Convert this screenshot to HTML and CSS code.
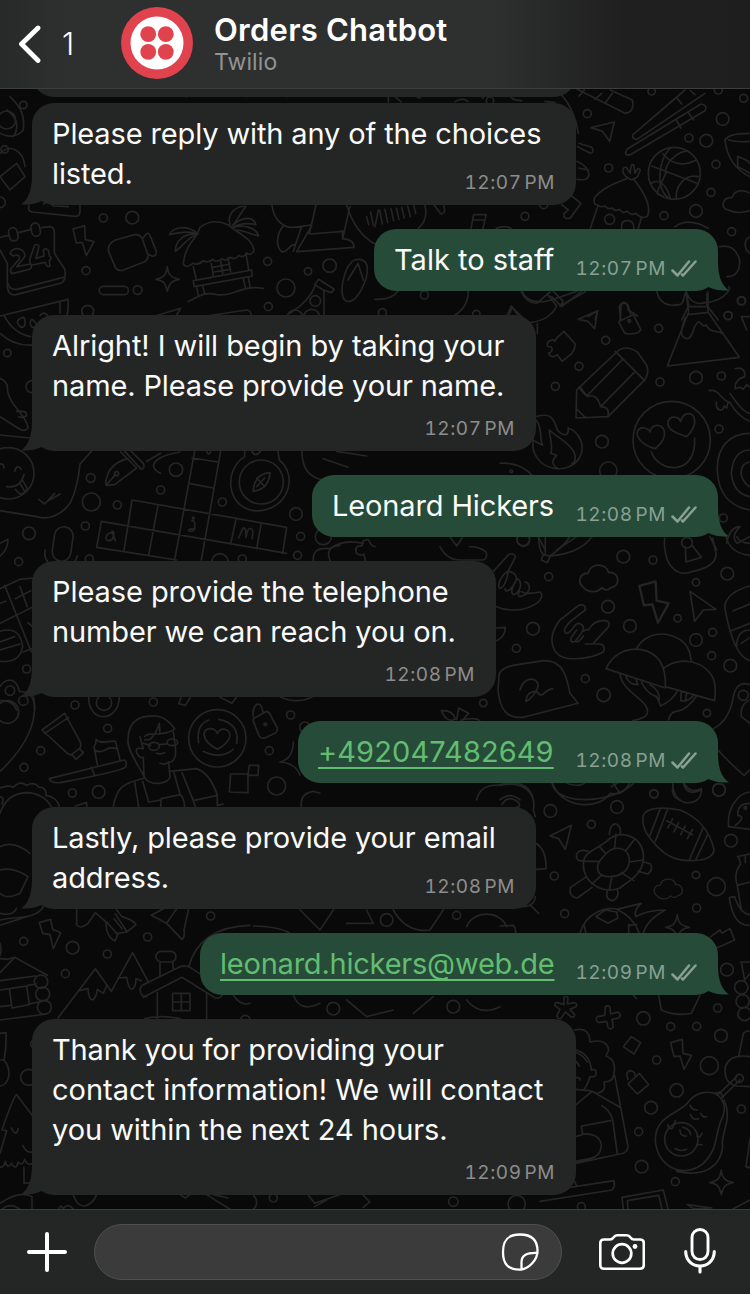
FILE: index.html
```html
<!DOCTYPE html>
<html lang="en">
<head>
<meta charset="utf-8">
<title>Orders Chatbot</title>
<link rel="stylesheet" href="styles.css">
</head>
<body>
<div class="app">
  <svg class="wallpaper" viewBox="0 0 750 1294" width="750" height="1294" aria-hidden="true">
    <defs>
      <path id="bolt" d="M0 10L35 0L37 42L63 48L40 90L28 50L10 52Z"/>
      <path id="cloud" d="M10 62C-8 48-2 22 22 22C28-8 72-8 78 20C108 16 112 60 84 62C76 72 66 68 60 62C48 76 24 78 10 62Z"/>
      <path id="spark" d="M34 0C36 24 44 32 70 38C46 42 40 50 34 74C28 48 22 42 0 38C24 32 30 26 34 0Z"/>
    </defs>
    <g transform="translate(0 90) scale(.3333)">
      <circle cx="20" cy="90" r="27"/><path d="M30 20C60 50 75 70 70 120C45 150 0 140-20 110M20 60C50 80 60 110 40 140M0 190C30 160 70 180 75 230M0 260L50 220L75 260L30 300Z"/><circle cx="70" cy="45" r="11"/><circle cx="14" cy="178" r="11"/>
      <path d="M120 0H240M360 14C420 0 480 0 560 20L610 0M700 0L740 20M860 20C900 0 940 0 990 14M1200 0L1260 24M1420 0L1450 24"/>
    </g>
    <g transform="translate(0 190) scale(.3333)">
      <path d="M88 45Q80 62 96 66L225 79Q240 80 240 65V45M130 42Q145 30 160 48L205 50"/>
      <path d="M0 142L25 136M55 128L94 118M124 113L148 110Q161 110 163 124V190M0 180L22 220V290Q24 318 48 314L184 279Q200 270 194 237L163 190M24 280Q28 300 50 298L190 262"/>
      <rect x="27" y="113" width="26" height="40" rx="13" transform="rotate(-12 40 133)"/><rect x="94" y="99" width="26" height="40" rx="13" transform="rotate(-12 107 119)"/>
      <path d="M30 190C45 165 78 178 74 200L50 230L92 222Q98 234 88 238L36 251Q28 244 34 235L58 207Q60 190 40 198ZM104 165Q118 160 116 173L108 205L132 198L130 180Q142 172 146 184L148 198Q158 204 148 212L150 228Q140 234 136 217L96 225Q86 220 90 206Z"/>
      <use href="#bolt" x="219" y="107"/>
      <path d="M346 150L404 134Q418 132 426 144L444 194Q446 208 432 216L368 241Q352 244 346 232L325 182Q324 160 346 150ZM428 145L440 131Q446 127 450 136L469 184Q470 198 458 199L442 192"/>
      <use href="#spark" x="468" y="230"/><rect x="298" y="289" width="87" height="25" rx="12"/>
      <path d="M600 112Q640 82 686 106C720 135 757 145 762 182Q755 198 740 190Q730 206 716 196Q706 212 690 202Q680 216 666 206Q650 220 638 208Q626 220 610 212Q594 228 578 220Q558 238 550 222C556 160 590 150 600 112Z"/>
      <path d="M592 130C560 104 520 110 508 134C540 126 570 122 590 132C550 130 526 154 526 184C550 168 564 140 594 132M690 104C680 70 710 46 738 50C720 70 710 96 696 108C730 76 760 80 768 104C740 98 720 100 700 112C730 104 770 112 776 138C750 132 730 120 706 120M580 230L588 265M738 190L746 240M634 220L640 256M684 204L692 246M580 272L755 240L757 258L582 290ZM590 292L596 320M608 288L614 310M730 264L736 292M745 262L750 290M638 232L690 222M640 246L692 238M662 212L668 250M564 335C600 318 610 305 650 314C700 322 720 284 790 295"/>
      <path d="M816 45C820 90 852 114 880 112C910 112 930 100 935 108L890 185L1062 172Q1064 150 1028 146L1050 50M948 45L928 132L1030 124M1028 126V146M904 112L880 184M850 108C834 126 826 160 840 180C856 200 870 160 884 164M1040 45Q1066 130 1125 162M1100 80L1106 104M1112 66L1120 106"/>
      <path d="M1052 220C1060 204 1100 200 1102 234C1104 270 1074 330 1050 334C1020 340 1024 290 1032 262C1038 240 1044 226 1052 220ZM1044 270L1074 220L1090 270M944 284L956 268L1003 298L994 308L970 300ZM944 290Q930 330 870 370M972 304V380"/>
      <circle cx="310" cy="84" r="12"/><circle cx="397" cy="83" r="19"/><circle cx="258" cy="242" r="12"/><circle cx="413" cy="300" r="13"/><circle cx="263" cy="364" r="18"/><circle cx="803" cy="214" r="12"/><circle cx="858" cy="294" r="27"/><circle cx="924" cy="244" r="11"/><circle cx="989" cy="227" r="20"/><circle cx="946" cy="333" r="16"/><circle cx="805" cy="350" r="12"/><circle cx="0" cy="37" r="16"/><circle cx="22" cy="489" r="11"/><circle cx="96" cy="590" r="18"/><circle cx="885" cy="384" r="24"/><circle cx="935" cy="382" r="24"/>
      <path d="M0 378L204 328Q212 430 120 462Q50 476 0 430M12 376Q40 430 92 440M180 336V370M466 378L542 355L528 378M620 378L740 360Q752 360 754 376M54 402C48 390 60 384 72 382C76 396 80 412 62 412ZM96 412C86 400 92 390 96 388C110 398 118 412 96 412ZM120 376Q134 362 144 378"/>
      <path d="M0 565Q26 576 22 600C30 650 76 670 84 712Q76 730 50 712L0 680M50 664Q80 660 80 676Q70 686 56 680M0 735L90 744"/>
    </g>
    <g transform="translate(375 60) scale(.3333)">
      <path d="M604 86L750 160Q780 156 772 120L706 90M628 90L612 108M660 118L680 100M690 130L712 100M648 203L718 186L704 244L682 214Z"/>
      <path d="M930 90L774 224Q770 238 786 238L990 100M908 116L920 132M946 92L960 104M978 132Q1000 136 990 152L766 284Q744 288 756 268ZM904 180L918 204M940 158L956 180"/>
      <circle cx="898" cy="340" r="78"/><path d="M830 318L966 370M886 264C850 300 840 390 884 416M936 272C900 280 870 310 872 340C860 370 840 400 850 404M864 282C900 324 940 312 964 300M828 370C860 350 880 390 886 416M970 350C930 340 900 380 904 416"/>
      <path d="M756 352C740 340 740 320 754 322L766 340Q766 310 776 314L780 340Q790 318 796 330L788 350L770 360ZM756 356C720 370 680 384 658 414Q654 436 668 434Q676 444 690 438Q700 450 712 444Q720 456 734 448Q742 462 756 454Q768 468 782 460Q804 480 818 468C828 440 810 400 778 360M668 440L646 505M800 470L790 505"/>
      <path d="M740 505V496Q742 480 760 482Q778 484 776 505M1125 220Q1060 220 1050 240Q1060 320 1125 350M1060 240Q1090 248 1125 244M1088 290V320Q1110 330 1125 340M1088 290Q1120 300 1125 310M1125 400C1108 390 1080 386 1072 412C1040 412 1036 446 1060 450C1080 460 1100 460 1125 452"/>
      <path d="M560 105Q600 150 610 220M612 250L650 262Q660 276 646 280L608 260M606 304Q640 320 642 344Q640 364 606 358M610 324L640 330M590 408L618 430L586 474Q566 480 566 462L580 450L560 434M40 110V126M78 126L60 110M240 125Q264 110 278 124M404 105Q410 122 440 122M510 124L540 128"/>
      <path d="M0 500L10 450M14 450L22 492M30 448L38 488M48 446L56 482M64 444L72 478M80 442L88 474M98 438L106 470M116 436L122 460M150 436Q160 480 130 505M178 436L198 462Q212 460 208 446L206 436M296 464H334L324 505M296 464L288 505M294 480H330M364 505Q390 495 408 505M900 500Q940 470 1000 505M1034 560Q1080 550 1094 600Q1096 650 1056 650M845 690C850 730 880 740 906 734C930 740 926 700 934 696C946 730 970 734 990 728C1040 726 1070 690 1062 680M934 700L942 740L996 740V700M940 740L920 780M998 740L1030 780M1125 530Q1104 540 1114 570L1125 580"/>
      <path d="M0 718Q50 720 70 692M280 692Q280 740 240 765M440 692Q460 740 530 720L610 692M530 710L560 740L620 694M400 770L412 742L440 770M640 770L668 752L660 780M738 740Q740 722 756 734L760 750L788 768M738 742L736 780"/>
      <circle cx="830" cy="94" r="11"/><circle cx="1030" cy="90" r="12"/><circle cx="1106" cy="115" r="12"/><circle cx="1043" cy="177" r="19"/><circle cx="637" cy="161" r="12"/><circle cx="942" cy="234" r="12"/><circle cx="994" cy="242" r="19"/><circle cx="1023" cy="313" r="12"/><circle cx="701" cy="324" r="12"/><circle cx="1008" cy="397" r="12"/><circle cx="963" cy="453" r="19"/><circle cx="867" cy="467" r="12"/><circle cx="704" cy="478" r="15"/><circle cx="1070" cy="515" r="12"/><circle cx="450" cy="469" r="12"/><circle cx="506" cy="434" r="12"/><circle cx="345" cy="122" r="11"/><circle cx="148" cy="705" r="12"/><circle cx="22" cy="758" r="12"/><circle cx="304" cy="762" r="11"/><circle cx="1100" cy="722" r="12"/><circle cx="1060" cy="767" r="12"/>
    </g>
    <g transform="translate(500 290) scale(.3333)">
      <path d="M20 78L34 48L56 78M112 100V130M64 6Q80 40 110 40L150 6M90 98Q150 90 170 48L144 14M160 4L190 34L180 48M180 48L256 5M235 88L293 62L284 116L264 94ZM360 92L400 74L422 118Q420 126 408 130L386 132Q374 132 370 122L356 96ZM362 90L358 50Q370 26 384 46L392 72"/>
      <circle cx="388" cy="93" r="4"/>
      <path d="M192 124L226 162Q226 176 216 190L186 214L172 194Q154 208 146 190Q164 180 152 170Q136 172 144 156Q160 144 164 154L172 142ZM348 188Q376 160 414 188L440 226Q450 250 432 272L324 380L228 384L230 300ZM346 184L434 272M366 210L262 316M402 248L302 350M240 290L262 320Q290 308 302 350Q330 350 324 378M228 356L258 384M236 292Q250 310 262 320"/>
      <path d="M558 4L566 66L502 228L718 202L624 66V6M562 74L620 68M556 82C540 128 540 140 560 146C580 146 580 106 590 102C600 80 606 120 618 104C630 130 650 120 666 130"/>
      <circle cx="515" cy="450" r="116"/><path d="M466 476C440 470 408 450 412 426C420 404 446 416 450 426C456 400 480 402 490 416C502 440 480 464 466 476ZM560 440C530 430 500 420 504 396C510 374 536 380 542 394C548 368 574 364 582 382C590 406 572 430 560 440ZM454 486C476 550 590 560 584 444"/>
      <path d="M100 382C150 366 160 380 172 420C190 440 208 440 204 414C240 426 258 470 238 504C210 550 130 548 104 490Q96 476 100 440M148 420C150 450 160 470 152 490L170 496Q146 520 172 534M148 420C180 450 200 450 222 486Q232 510 216 522M108 390C130 416 116 440 128 466L102 452M0 520Q60 516 96 556M628 302C660 296 660 330 690 338Q714 380 750 394M650 336C644 360 670 370 672 348L680 354L684 338M706 236C730 230 736 244 734 260Q702 270 706 296L720 292L730 298L740 284L750 292M690 310Q730 370 750 370M750 430C690 430 650 470 652 540C654 610 690 650 750 660M750 480Q700 480 694 550Q700 610 750 620M750 516Q720 520 724 556Q730 580 750 590M724 80H750M724 80L740 120"/>
      <circle cx="476" cy="115" r="12"/><circle cx="684" cy="77" r="12"/><circle cx="724" cy="33" r="12"/><circle cx="317" cy="151" r="12"/><circle cx="237" cy="229" r="12"/><circle cx="166" cy="289" r="12"/><circle cx="480" cy="276" r="12"/><circle cx="588" cy="263" r="19"/><circle cx="664" cy="258" r="12"/><circle cx="657" cy="417" r="12"/><circle cx="306" cy="455" r="19"/><circle cx="325" cy="542" r="26"/><circle cx="670" cy="684" r="12"/><circle cx="34" cy="544" r="4"/><circle cx="70" cy="750" r="19"/>
      <path d="M114 740L136 780M230 740L170 780M630 740L650 780M680 760Q690 710 720 710Q690 740 712 760L750 740"/>
    </g>
    <g transform="translate(0 440) scale(.3333)">
      <circle cx="25" cy="100" r="77"/><path d="M0 72Q12 70 12 84M44 94Q50 70 64 88M20 140Q60 146 72 104M46 148L60 162Q74 162 82 146L68 122M60 130L74 154M274 34L240 72Q232 150 210 190C180 230 140 240 110 230L0 212M116 178L134 192L164 160M142 184L180 162"/>
      <path d="M362 36L410 84L344 134L320 136Q314 130 320 114Q330 70 384 56M346 104L322 132M374 34L424 88Q436 84 430 70L394 34M440 64L482 40M540 36C460 50 440 80 482 100"/><circle cx="350" cy="101" r="6"/>
      <path d="M304 244L860 340M290 322L530 360M304 244L290 322M396 180L372 332M396 180L860 262L848 340M474 196L446 346M584 34L524 360M662 34L604 360M576 54L654 66M566 130L640 144M708 238L692 312M784 250L770 326M384 262L396 180"/>
      <path d="M342 278C316 276 312 302 326 302C344 302 344 270 336 274L346 302M566 270Q574 264 584 268V262Q586 240 576 242M584 264Q582 278 566 272M716 294L728 266Q738 256 738 292Q742 262 754 266Q762 270 756 296M620 34Q624 48 632 36"/><circle cx="580" cy="234" r="3"/>
      <circle cx="784" cy="126" r="66"/><path d="M734 34V50C670 90 680 200 760 212C860 220 900 110 838 60L834 34M756 34Q766 54 782 34M810 98C776 100 762 120 760 154C790 150 808 130 810 98ZM770 114L794 140M794 114L770 140M906 34Q906 110 970 120M970 56L1044 82M1010 34L1100 48"/>
      <rect x="160" y="260" width="56" height="104" rx="28" transform="rotate(8 188 312)"/><path d="M136 330Q130 350 144 366M232 348L226 362M0 310L24 298Q24 330 0 348"/>
      <circle cx="528" cy="89" r="20"/><circle cx="272" cy="114" r="13"/><circle cx="274" cy="186" r="27"/><circle cx="352" cy="195" r="12"/><circle cx="482" cy="150" r="12"/><circle cx="667" cy="186" r="12"/><circle cx="888" cy="222" r="19"/><circle cx="902" cy="289" r="12"/><circle cx="893" cy="346" r="12"/><circle cx="256" cy="258" r="12"/><circle cx="87" cy="280" r="19"/><circle cx="56" cy="365" r="12"/><circle cx="268" cy="357" r="12"/><circle cx="660" cy="366" r="25"/><circle cx="727" cy="357" r="12"/><circle cx="970" cy="290" r="24"/><circle cx="80" cy="687" r="12"/><circle cx="30" cy="752" r="14"/><circle cx="70" cy="782" r="14"/>
      <path d="M940 362Q936 320 990 326Q1030 296 1090 310M990 362Q974 320 1020 316M1070 340Q1060 316 1086 318Q1086 296 1106 300Q1114 320 1125 320M1070 340Q1084 350 1092 342L1096 362"/>
      <path d="M0 446L60 418L100 414M14 436L94 636M0 550L100 500M70 636L100 624M0 490L18 484M46 476L92 452M60 440L82 500M84 548L100 562M0 574Q60 556 68 620Q60 670 0 664M0 606L44 590M0 630L60 612M0 740Q14 716 38 722Q54 730 58 754L74 756Q104 764 104 810M0 782Q40 780 50 810"/>
    </g>
    <g transform="translate(440 530) scale(.3333)">
      <path d="M0 50Q20 90 60 90H130Q144 84 138 66Q120 50 88 50M30 20L50 48L66 24M296 20Q296 60 310 74L330 78Q420 70 456 20M316 20V70M390 20Q370 50 330 78M310 74L304 90L322 98L330 80"/>
      <path d="M160 124L206 74Q224 66 226 82L204 124M204 124C190 130 170 160 178 174C190 178 204 146 204 124C224 126 240 140 220 166C208 186 192 186 196 176M232 146C250 156 240 190 220 194Q210 186 220 170M256 156C276 164 270 194 240 200Q230 196 240 184M246 186Q260 194 300 186Q314 200 290 220C250 246 200 244 170 230"/>
      <path d="M378 310Q364 300 394 272L436 240Q438 220 416 226L360 270C320 320 330 380 390 386C430 388 460 382 490 366Q500 340 470 342L436 342M378 310Q386 312 402 290Q416 270 430 290Q434 300 406 334Q388 340 394 322L410 300M406 334Q416 340 430 318M430 304Q440 296 446 300Q460 270 496 272Q514 276 504 292L462 338M170 294L196 292Q196 320 170 332"/>
      <use href="#cloud" transform="translate(420 106) scale(1.1 1.08)"/><use href="#bolt" transform="translate(598 154) scale(1.4 1.38)"/><path d="M750 184L828 238L790 240L764 274ZM674 24Q670 50 682 90C700 130 730 136 760 124Q830 110 828 70L818 24M736 52L738 96L784 82L756 46"/><circle cx="741" cy="38" r="16"/>
      <path d="M178 430Q190 412 220 406L310 392C370 390 380 440 390 490L414 520L250 562C200 566 180 540 174 480ZM240 480C250 440 290 440 294 464C296 480 270 510 258 514C260 480 290 480 300 494C314 500 310 480 338 476"/>
      <path d="M498 416C520 370 560 354 600 358C650 366 680 400 676 474ZM588 358C610 320 650 304 690 316C740 330 750 360 754 394M670 416C700 392 740 386 780 404C824 430 830 460 824 512L676 470M540 434C550 490 630 510 622 550Q618 566 578 572M558 438Q564 464 594 464L588 448M604 456Q620 490 650 500L662 528Q700 510 714 480M630 464Q660 480 658 510M724 484L722 512Q746 516 762 494M740 490L736 514M768 500Q740 540 710 544Q690 546 686 570"/>
      <path d="M930 168Q860 186 854 230Q880 380 930 392M880 242L930 222M870 304L930 280M904 340L930 322M930 300Q890 300 890 350M820 596Q870 570 880 500Q890 450 930 464M930 510Q900 520 904 560L930 580M834 660Q870 700 912 736L930 720M858 20Q870 70 930 76M890 20Q900 40 930 40"/>
      <path d="M4 542Q40 540 46 568Q20 580 4 542ZM50 568L56 534L86 550L66 572M64 570Q110 560 120 574M110 810Q120 764 170 766C230 750 270 760 280 810M180 810Q210 784 240 810M336 760C350 830 520 820 580 760M520 760L540 790M700 765Q690 800 720 810M730 760Q740 800 784 780"/>
      <circle cx="326" cy="140" r="12"/><circle cx="550" cy="80" r="19"/><circle cx="639" cy="90" r="12"/><circle cx="504" cy="230" r="19"/><circle cx="570" cy="288" r="19"/><circle cx="279" cy="296" r="19"/><circle cx="229" cy="355" r="12"/><circle cx="436" cy="446" r="12"/><circle cx="491" cy="495" r="20"/><circle cx="130" cy="519" r="11"/><circle cx="768" cy="157" r="11"/><circle cx="862" cy="131" r="19"/><circle cx="713" cy="265" r="11"/><circle cx="768" cy="330" r="19"/><circle cx="818" cy="307" r="12"/><circle cx="815" cy="377" r="12"/><circle cx="871" cy="407" r="19"/><circle cx="801" cy="549" r="11"/><circle cx="250" cy="28" r="19"/><circle cx="910" cy="496" r="15"/><circle cx="642" cy="792" r="12"/><circle cx="837" cy="779" r="19"/>
    </g>
    <g transform="translate(0 680) scale(.3333)">
      <path d="M100 50C116 120 80 200 0 274M126 150L194 100L240 184Q246 200 238 206L214 224Q208 226 200 218ZM134 160L206 112M238 206L250 218L228 238L216 224M148 296L372 240Q384 246 376 262Q360 274 180 308Q150 310 148 296ZM274 262L284 286M292 254L282 200Q290 190 288 178C304 196 330 180 346 184Q356 220 360 240M284 210Q296 220 316 210Q330 200 350 206"/>
      <path d="M436 296C424 270 380 210 384 180C384 120 420 106 470 108Q500 112 524 146Q520 156 478 162Q440 160 434 170M434 180L450 178Q470 160 478 130L480 160M420 170L430 206Q400 200 412 222Q420 236 430 232L432 290Q444 312 476 310Q508 306 510 290L506 248Q532 244 526 200L520 156M430 190L452 196M478 194L500 192"/>
      <ellipse cx="462" cy="199" rx="16" ry="12"/><ellipse cx="517" cy="187" rx="16" ry="10"/><path d="M470 220Q482 224 494 218M480 250Q496 256 506 246M340 380C350 320 370 310 434 294M508 274L590 266Q630 280 652 346L580 362L546 278M404 306L416 380M428 304L446 366L482 360M482 380L484 356L540 344Q552 350 554 380M522 278L540 342M580 362L586 380M652 346V376M652 376L670 372M226 378L260 368V380"/>
      <circle cx="652" cy="175" r="86"/><path d="M652 208C600 180 606 146 630 146Q646 146 652 160Q660 144 676 148C704 160 686 190 652 208ZM596 188C590 150 600 130 626 120M656 118Q720 130 710 190M700 208Q660 240 610 214"/>
      <path d="M760 110Q756 82 772 72Q784 72 786 86L790 98M764 114L800 94Q808 96 812 106L832 144Q834 156 820 162L794 174Q780 176 776 164L760 124Q758 116 764 114Z"/><circle cx="796" cy="133" r="4"/>
      <path d="M692 282H744V338L688 336ZM748 256H776L774 286H744ZM880 186Q880 236 840 246Q888 250 900 286M904 380Q900 340 940 334L960 340M536 72L544 50M540 72L556 76L570 54M660 52L696 70L710 50M840 50Q890 74 938 50M266 50C264 130 356 130 358 50"/>
      <circle cx="312" cy="68" r="23"/><circle cx="225" cy="75" r="12"/><circle cx="323" cy="145" r="12"/><circle cx="460" cy="66" r="12"/><circle cx="122" cy="212" r="12"/><circle cx="72" cy="262" r="12"/><circle cx="217" cy="339" r="12"/><circle cx="296" cy="336" r="19"/><circle cx="872" cy="105" r="12"/><circle cx="808" cy="212" r="12"/><circle cx="830" cy="318" r="27"/><circle cx="915" cy="142" r="16"/><circle cx="22" cy="96" r="34"/>
      <path d="M0 400Q20 340 80 338Q130 340 154 380M0 324Q26 314 40 322Q60 300 80 316Q104 304 116 322Q140 320 138 348M138 346Q170 350 178 380M0 350Q14 352 6 372"/>
      <path d="M0 500Q40 480 90 520M0 570Q40 560 84 590L60 640Q20 660 0 640"/>
    </g>
    <g transform="translate(500 780) scale(.3333)">
      <path d="M0 16C70 0 110 40 100 90L106 110M6 74Q26 40 58 70L58 80L44 84M156 4C180 90 300 90 330 40Q370 50 392 4M200 10Q240 24 260 4M334 20L360 4M518 10C520 90 610 80 604 26Q570 44 550 6"/>
      <path d="M430 106C440 82 490 80 540 90C590 110 630 150 642 210Q640 234 600 240C520 250 480 220 440 160Q424 130 430 106ZM480 88L450 166M502 90L466 184M610 142L568 240M624 162L588 238M500 122L578 164M518 116L504 144M536 128L522 156M556 138L542 164M578 148L562 176M150 168L214 136L196 208L176 176Z"/>
      <path d="M322 182C350 150 420 160 430 220C436 280 390 300 360 324C310 344 250 310 250 252C250 214 290 210 322 182Z"/><path d="M310 230C340 190 390 200 388 244C386 280 350 290 330 290C290 290 280 260 310 230ZM348 162L344 202M298 200L318 222M404 178L376 214M430 240L388 246M402 302L364 278M328 330L336 290M276 312L306 284M250 244H296M328 164Q330 130 348 132Q366 140 360 164M250 242Q226 246 230 222Q240 206 264 214M276 322L232 354Q204 350 212 322L256 292M322 334Q314 360 340 362Q360 350 352 328M432 246L452 252Q460 270 444 282L414 274"/>
      <use href="#cloud" transform="translate(463 298) scale(.82 .8)"/><use href="#spark" x="498" y="404"/>
      <path d="M240 460C260 390 330 380 350 388L424 370Q400 390 408 410Q440 390 496 390Q440 420 430 460M350 388Q400 410 418 460M288 410L316 390L350 396L354 414L324 430ZM386 434V460M252 436L258 460M386 436L410 434M108 190Q140 210 138 266L108 268M66 380Q104 380 106 350M90 374L116 400M0 438L40 436Q50 450 46 460"/>
      <path d="M750 36C710 40 680 90 686 140L750 148M750 70Q710 70 714 106Q740 110 706 136M712 230L750 222M716 232L722 252M736 226V248M722 252Q700 280 712 316L724 390M712 316L750 306M688 354Q700 440 750 436M690 352L704 350Q720 400 750 404M632 470L660 450L666 460L690 446L704 480L650 504M722 546H750M724 546L734 600L750 580"/>
      <path d="M400 646L410 656M476 646L484 690Q530 710 574 700L600 646"/>
      <circle cx="151" cy="93" r="19"/><circle cx="351" cy="81" r="19"/><circle cx="274" cy="133" r="12"/><circle cx="462" cy="41" r="12"/><circle cx="657" cy="30" r="19"/><circle cx="693" cy="182" r="19"/><circle cx="163" cy="288" r="12"/><circle cx="194" cy="401" r="12"/><circle cx="588" cy="285" r="11"/><circle cx="649" cy="320" r="27"/><circle cx="590" cy="384" r="12"/><circle cx="681" cy="569" r="19"/><circle cx="724" cy="622" r="20"/><circle cx="728" cy="664" r="20"/><circle cx="736" cy="84" r="4"/>
    </g>
    <g transform="translate(0 890) scale(.3333)">
      <path d="M0 70Q40 80 50 54M0 90Q20 86 40 84Q120 80 130 48M0 106L80 80M118 98L152 88L158 118L182 128L160 176L150 134L128 130ZM230 56V104Q240 120 264 100L286 68L318 96L320 120Q330 150 346 152L354 130L380 126L408 104Q400 90 366 80L350 60M320 96L350 130M346 72L380 124M342 86L366 116M454 76L500 100L546 148Q556 140 552 120L566 56M454 76L490 56M500 100L530 56"/>
      <path d="M0 206L24 208L44 202L142 256M0 248L44 202M0 272L106 258M0 300L28 296M82 286L110 282M0 350L32 346M86 342L116 336M0 390L140 372M28 296L80 288L88 344L36 354Z"/>
      <circle cx="123" cy="275" r="20"/><circle cx="128" cy="312" r="21"/><circle cx="133" cy="352" r="21"/>
      <path d="M174 384L286 236L334 304L398 188L446 278M236 302L264 296Q266 330 278 330Q290 320 292 298L310 310L320 288M354 264L380 262Q386 298 396 298Q408 290 408 266L424 272"/>
      <rect x="468" y="184" width="60" height="32" rx="16"/><path d="M480 220V258M518 216L520 236M420 300Q420 290 430 284L540 230Q556 224 570 232L660 290M430 322L546 262L646 324Q660 326 666 316M420 300Q422 320 440 320M472 308V386M620 310V386M434 386Q480 374 540 386M518 310H570V362H518ZM544 310V362M518 336H570M566 230Q600 110 750 106M700 316Q724 350 750 340"/>
      <circle cx="71" cy="154" r="12"/><circle cx="218" cy="173" r="19"/><circle cx="196" cy="251" r="12"/><circle cx="322" cy="192" r="12"/><circle cx="443" cy="141" r="12"/><circle cx="632" cy="78" r="12"/><circle cx="736" cy="390" r="14"/><circle cx="86" cy="562" r="24"/><circle cx="104" cy="462" r="12"/>
      <path d="M0 430L18 428Q20 470 12 510Q30 530 26 560Q20 586 0 588M0 510H12M50 614Q40 620 6 720L20 722L0 790M50 614L100 680M34 714Q50 744 54 716M68 766Q80 790 96 786M0 830Q10 836 16 814Q22 840 34 820Q48 844 54 816Q68 830 74 808Q82 830 98 820M72 832V880L90 878M0 160Q6 180 0 196"/>
      <path d="M0 940Q60 900 96 920V958M6 958Q30 936 60 958M176 958Q182 940 190 956Q204 936 220 958M220 914Q230 950 256 948Q280 940 290 914M620 914L690 958M640 914L684 924"/>
      <path d="M760 108Q840 110 870 130M900 60L960 120L1000 60M1040 100H1120L1100 60M1180 60Q1220 130 1290 120L1330 60M1400 110C1420 60 1500 60 1520 110M880 314Q900 370 960 340M1040 330L1100 380L1180 360M1240 370L1300 320M1400 330Q1440 380 1500 350"/><circle cx="1160" cy="90" r="19"/><circle cx="1370" cy="76" r="12"/><circle cx="1000" cy="356" r="19"/><circle cx="1360" cy="350" r="19"/><circle cx="820" cy="924" r="12"/>
      <path d="M540 914L556 924L570 914M760 914Q780 940 760 958M924 914L944 940L1020 914M944 950L980 930M1088 914L1110 936L1090 952"/>
    </g>
    <g transform="translate(540 990) scale(.3333)">
      <path d="M72 22Q82 16 84 24L82 42L102 38Q114 40 108 50L90 58L104 74Q104 84 92 80L76 66L62 86Q50 88 52 74L60 58L44 46Q44 36 54 38L72 44ZM196 50Q206 44 210 52L212 72L234 66Q246 74 236 84L216 88L220 110Q212 122 204 112L200 94L176 98Q164 90 172 80L194 76ZM274 140L302 158L282 192L250 170ZM264 268Q254 244 272 242Q288 246 284 256M298 250L326 284L292 312L264 282Z"/>
      <use href="#bolt" x="392" y="148"/><use href="#spark" x="510" y="540"/>
      <path d="M104 120Q150 110 150 156Q200 144 206 180L198 198Q230 210 222 250Q220 276 192 276Q200 306 170 310L150 302Q130 300 104 298M106 180Q150 190 154 240Q170 236 168 250Q170 262 150 260Q140 290 132 298M106 186Q130 196 142 216M224 256L264 470Q262 490 240 492L106 520M108 344L156 304L240 352M186 348Q210 360 218 390L232 492M126 408L212 392M124 410L128 434L106 440M128 432Q184 430 184 470Q180 500 150 506L106 514M110 216L118 228M106 262Q122 262 120 270M0 634L216 600Q226 590 222 572L90 592M104 574L110 588"/>
      <path d="M490 308C540 300 564 340 548 380C520 440 540 470 490 520C430 570 350 530 346 450C346 370 430 370 450 330Q466 312 490 308ZM552 330C580 390 540 430 548 470C540 540 480 560 410 544"/><circle cx="424" cy="448" r="50"/><path d="M450 346Q456 360 472 360M482 370Q488 384 500 380M452 374Q458 392 476 386M420 420Q420 440 440 438M428 412Q450 416 452 434M406 476Q424 486 440 478M384 404Q384 418 396 416Q402 406 406 392M470 438Q480 446 486 430M470 464L486 464M532 316L590 260M546 322L600 270M524 310L540 306L550 322M630 200Q570 190 556 230Q550 280 590 288L630 290M596 200L610 130Q620 120 630 124"/><circle cx="598" cy="265" r="12"/><circle cx="614" cy="72" r="20"/>
      <path d="M250 656L246 622L370 600L384 656M264 656L262 632L356 616L366 656M442 644L516 654L460 656ZM580 656L630 630M630 446L618 530L630 534"/>
      <circle cx="310" cy="85" r="20"/><circle cx="392" cy="110" r="12"/><circle cx="470" cy="109" r="12"/><circle cx="533" cy="54" r="12"/><circle cx="543" cy="137" r="19"/><circle cx="350" cy="210" r="12"/><circle cx="508" cy="227" r="27"/><circle cx="410" cy="301" r="20"/><circle cx="333" cy="353" r="19"/><circle cx="296" cy="425" r="12"/><circle cx="305" cy="530" r="19"/><circle cx="406" cy="575" r="12"/><circle cx="604" cy="357" r="12"/><circle cx="124" cy="650" r="12"/><circle cx="-70" cy="642" r="26"/><circle cx="-260" cy="635" r="14"/>
    </g>
  </svg>

  <header class="header">
    <svg class="back" viewBox="0 0 24 40" width="24" height="40"><path d="M21 4L4.500 20L21 36.500"/></svg>
    <span class="count">1</span>
    <svg class="avatar" viewBox="0 0 72 72" width="72" height="72">
      <circle cx="36" cy="36" r="36" fill="#e0434d"/><circle cx="36" cy="36" r="26.500" fill="#fff"/>
      <g fill="#e0434d"><circle cx="27.200" cy="27.200" r="7.900"/><circle cx="44.800" cy="27.200" r="7.900"/><circle cx="27.200" cy="44.800" r="7.900"/><circle cx="44.800" cy="44.800" r="7.900"/></g>
    </svg>
    <div class="titles"><div class="title">Orders Chatbot</div><div class="subtitle">Twilio</div></div>
  </header>

  <main class="chat">
    <div class="bubble stub"></div>
    <div class="bubble in w544"><svg class="tail" viewBox="0 0 40 30"><path d="M12 0C12 14 9 24 1 29.500C10 30 18 28 23 25.500L40 10L30 0Z"/></svg><p>Please reply with any of the choices<br>listed.</p><span class="meta tuck">12:07<i></i>PM</span></div>
    <div class="bubble out w344"><svg class="tail" viewBox="0 0 40 30"><path d="M12 0C12 14 9 24 1 29.500C10 30 18 28 23 25.500L40 10L30 0Z"/></svg><p class="even">Talk to staff</p><span class="meta">12:07<i></i>PM<svg class="ticks" viewBox="0 0 27 20"><path d="M2.500 11.500L7.500 16.500L19 2.500M12 15.500L13 16.500L25.500 2.500"/></svg></span></div>
    <div class="bubble in w504"><svg class="tail" viewBox="0 0 40 30"><path d="M12 0C12 14 9 24 1 29.500C10 30 18 28 23 25.500L40 10L30 0Z"/></svg><p><span class="snug">Alright! I will begin by taking your</span><br>name. Please provide your name.</p><span class="meta">12:07<i></i>PM</span></div>
    <div class="bubble out w406"><svg class="tail" viewBox="0 0 40 30"><path d="M12 0C12 14 9 24 1 29.500C10 30 18 28 23 25.500L40 10L30 0Z"/></svg><p>Leonard Hickers</p><span class="meta">12:08<i></i>PM<svg class="ticks" viewBox="0 0 27 20"><path d="M2.500 11.500L7.500 16.500L19 2.500M12 15.500L13 16.500L25.500 2.500"/></svg></span></div>
    <div class="bubble in w464"><svg class="tail" viewBox="0 0 40 30"><path d="M12 0C12 14 9 24 1 29.500C10 30 18 28 23 25.500L40 10L30 0Z"/></svg><p><span class="snug">Please provide the telephone</span><br>number we can reach you on.</p><span class="meta">12:08<i></i>PM</span></div>
    <div class="bubble out w420"><svg class="tail" viewBox="0 0 40 30"><path d="M12 0C12 14 9 24 1 29.500C10 30 18 28 23 25.500L40 10L30 0Z"/></svg><p><a class="link phone">+492047482649</a></p><span class="meta">12:08<i></i>PM<svg class="ticks" viewBox="0 0 27 20"><path d="M2.500 11.500L7.500 16.500L19 2.500M12 15.500L13 16.500L25.500 2.500"/></svg></span></div>
    <div class="bubble in w504"><svg class="tail" viewBox="0 0 40 30"><path d="M12 0C12 14 9 24 1 29.500C10 30 18 28 23 25.500L40 10L30 0Z"/></svg><p>Lastly, please provide your email<br>address.</p><span class="meta tuck">12:08<i></i>PM</span></div>
    <div class="bubble out w518"><svg class="tail" viewBox="0 0 40 30"><path d="M12 0C12 14 9 24 1 29.500C10 30 18 28 23 25.500L40 10L30 0Z"/></svg><p><a class="link email">leonard.hickers@web.de</a></p><span class="meta">12:09<i></i>PM<svg class="ticks" viewBox="0 0 27 20"><path d="M2.500 11.500L7.500 16.500L19 2.500M12 15.500L13 16.500L25.500 2.500"/></svg></span></div>
    <div class="bubble in w544"><svg class="tail" viewBox="0 0 40 30"><path d="M12 0C12 14 9 24 1 29.500C10 30 18 28 23 25.500L40 10L30 0Z"/></svg><p>Thank you for providing your<br><span class="even">contact information! We will contact</span><br><span class="snug">you within the next 24 hours.</span></p><span class="meta">12:09<i></i>PM</span></div>
  </main>

  <footer class="composer">
    <svg class="icon plus" viewBox="0 0 40 40" width="40" height="40"><path d="M20 2V38M2 20H38" stroke-width="4"/></svg>
    <div class="field">
      <svg class="icon" viewBox="0 0 38 38" width="38" height="38"><path d="M20 36.500C7 37 2 31 2 19C2 7 7 1.500 19 1.500C31 1.500 36.500 7 36.500 18C36.500 27 28 35.500 20 36.500ZM36.500 20C25 19.500 20.500 23 20.500 29V36.500" stroke-width="2.300"/></svg>
    </div>
    <svg class="icon camera" viewBox="0 0 46 36" width="46" height="36"><path d="M5 5.500H11Q13 5.500 14.500 3.500Q16 1.300 18 1.300H28Q30 1.300 31.500 3.500Q33 5.500 35 5.500H41Q44.800 5.500 44.800 9V31Q44.800 34.700 41 34.700H5Q1.300 34.700 1.300 31V9Q1.300 5.500 5 5.500Z" stroke-width="2.600"/><circle cx="23" cy="19.500" r="9.300" stroke-width="2.700"/><circle cx="36" cy="12.500" r="2.400" fill="#fff" stroke="none"/></svg>
    <svg class="icon mic" viewBox="0 0 32 46" width="32" height="46"><rect x="8" y="1.500" width="16" height="30" rx="8" stroke-width="2.900"/><path d="M1.700 23.500C2 43 30 43 30.300 23.500M16 38.500V44" stroke-width="3.100"/></svg>
  </footer>
</div>
</body>
</html>
```
FILE: styles.css
```css
* { box-sizing: border-box; }
body { margin: 0; background: #090909; font-family: Inter, "Liberation Sans", sans-serif; }
.app { position: relative; width: 750px; height: 1294px; overflow: hidden; display: flex; flex-direction: column; background: #090909; }
.wallpaper { position: absolute; inset: 0; fill: none; stroke: #252525; stroke-width: 5; stroke-linecap: round; stroke-linejoin: round; }

.header { position: relative; z-index: 1; flex: none; height: 89px; display: flex; align-items: center; padding-left: 17px; border-bottom: 1px solid #3c3d3d; background: linear-gradient(90deg, #282929 0, #2e2f2f 70px, #2e2f2f 490px, #1f1f1f 625px, #1e1e1e 100%); color: #fff; }
.back { fill: none; stroke: #fff; stroke-width: 4.8; stroke-linecap: round; stroke-linejoin: round; }
.count { width: 36px; margin-left: 21px; font-size: 31px; line-height: 40px; font-weight: 300; }
.avatar { margin: -2px 0 0 23px; }
.titles { margin: 0 0 0 21px; }
.title { font-size: 31px; line-height: 36px; font-weight: 600; letter-spacing: .25px; white-space: nowrap; }
.subtitle { font-size: 23px; line-height: 28px; color: #929393; letter-spacing: .1px; }

.chat { position: relative; flex: 1; display: flex; flex-direction: column; align-items: flex-start; gap: 24px; padding: 0 32px; }
.bubble { position: relative; flex: none; border-radius: 22px; padding: 11px 21px 11px 20px; font-size: 29px; line-height: 40px; letter-spacing: -.13px; color: #fafafa; white-space: nowrap; }
.bubble p { position: relative; margin: 0; }
.bubble .even { letter-spacing: 0; }
.bubble .snug { letter-spacing: -.07px; }
.stub { width: 544px; height: 48px; padding: 0; margin: -40px 0 -18px; background: #242625; }
.in { display: flex; flex-direction: column; background: #242625; --bubble: #242625; }
.out { display: flex; justify-content: space-between; align-items: flex-end; align-self: flex-end; background: #264b39; --bubble: #264b39; }
.w344 { width: 344px; } .w406 { width: 406px; } .w420 { width: 420px; } .w464 { width: 464px; }
.w504 { width: 504px; } .w518 { width: 518px; } .w544 { width: 544px; }
.meta { position: relative; display: flex; align-items: center; align-self: flex-end; margin-top: 12px; height: 22px; font-size: 19px; line-height: 22px; font-variant-numeric: tabular-nums; letter-spacing: .55px; color: #8c8d8d; }
.meta i { width: 3px; }
.meta.tuck { margin-top: -22px; }
.out .meta { color: #89a093; }
.ticks { width: 27px; height: 20px; margin-left: 4px; fill: none; stroke: currentColor; stroke-width: 2.5; stroke-linecap: round; stroke-linejoin: round; }
.tail { position: absolute; left: -12px; bottom: 0; width: 40px; height: 30px; fill: var(--bubble); }
.out .tail { left: auto; right: -12px; transform: scaleX(-1); }
.link { color: #62bd70; text-decoration: underline; text-decoration-thickness: 2px; text-underline-offset: 5px; text-decoration-skip-ink: none; }
.phone { letter-spacing: .1px; }
.email { letter-spacing: -.22px; }

.composer { position: relative; flex: none; height: 85px; display: flex; align-items: center; padding-left: 27px; border-top: 1px solid #3b3c3c; background: #242625; }
.icon { flex: none; fill: none; stroke: #fff; stroke-linecap: round; stroke-linejoin: round; }
.field { width: 468px; height: 56px; margin-left: 27px; display: flex; align-items: center; justify-content: flex-end; padding-right: 22px; border: 1px solid #505050; border-radius: 28px; background: #3b3b3b; }
.camera { margin-left: 37px; }
.mic { margin: -3px 0 0 39px; }
```
